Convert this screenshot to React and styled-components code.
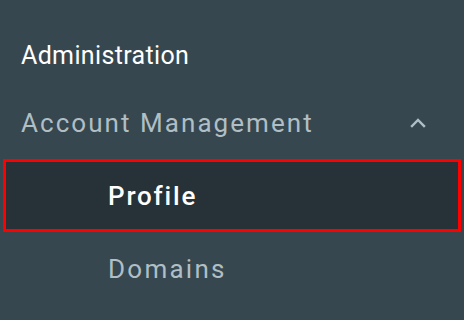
import React from "react";
import styled, { createGlobalStyle } from "styled-components";

const Global = createGlobalStyle`
  html, body { margin: 0; padding: 0; background: #37474f; }
  body { font-family: Roboto, "Noto Sans", sans-serif; }
`;

const Nav = styled.nav`
  width: 464px;
  height: 320px;
  background: #37474f;
  display: flex;
  flex-direction: column;
  padding-top: 21px;
  box-sizing: border-box;
`;

const Heading = styled.div`
  height: 69px;
  display: flex;
  align-items: center;
  padding-left: 21px;
  font-size: 25px;
  letter-spacing: 0.35px;
  color: #ffffff;
`;

const Group = styled.div`
  height: 69px;
  box-sizing: border-box;
  display: flex;
  align-items: center;
  justify-content: space-between;
  padding: 0 34px 3px 21px;
  font-size: 26px;
  letter-spacing: 2.05px;
  color: #b0bec5;
`;

const Item = styled.div`
  height: 67px;
  display: flex;
  align-items: center;
  margin: 0 3px;
  padding-left: 102px;
  font-size: 26px;
  letter-spacing: ${(p) => (p.$active ? "1.8px" : "2.25px")};
  color: ${(p) => (p.$active ? "#ffffff" : "#b0bec5")};
  font-weight: ${(p) => (p.$active ? 500 : 400)};
  background: ${(p) => (p.$active ? "#263238" : "transparent")};
  border: 3px solid ${(p) => (p.$active ? "#ff0000" : "transparent")};
`;

const Chevron = () => (
  <svg width="24" height="24" viewBox="0 0 24 24" fill="none" stroke="#b0bec5" strokeWidth="2.4" strokeLinecap="square">
    <path d="M6 15l6-6 6 6" />
  </svg>
);

export default function App() {
  return (
    <>
      <Global />
      <Nav>
        <Heading>Administration</Heading>
        <Group>
          <span>Account Management</span>
          <Chevron />
        </Group>
        <Item $active>Profile</Item>
        <Item>Domains</Item>
      </Nav>
    </>
  );
}
